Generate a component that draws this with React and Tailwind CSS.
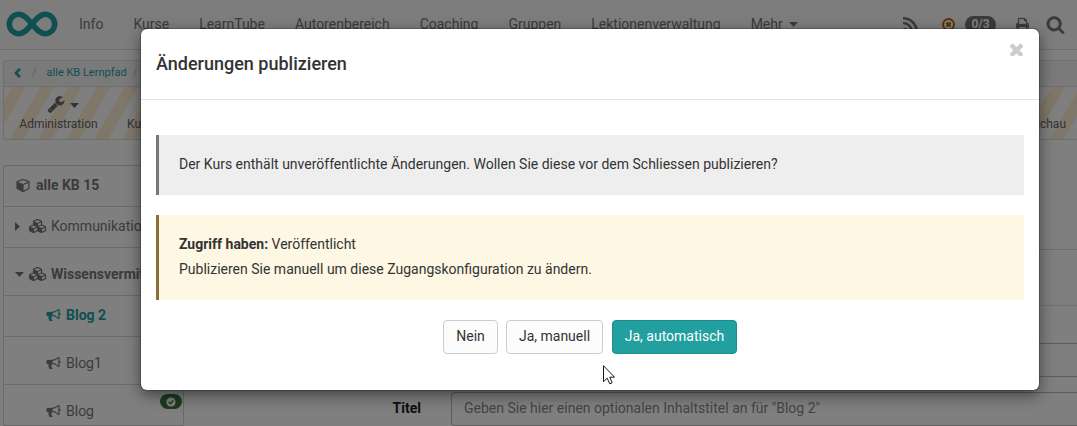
import React from "react";

const ICONS = {
  bullhorn: ["0 0 1792 1792", "M1664 640q53 0 90.5 37.5t37.5 90.5-37.5 90.5-90.5 37.5v384q0 52-38 90t-90 38q-417-347-812-380-58 19-91 66t-31 100.5 40 92.5q-20 33-23 65.5t6 58 33.5 55 48 50 61.5 50.5q-29 58-111.5 83t-168.5 11.5-132-55.5q-7-23-29.5-87.5t-32-94.5-23-89-15-101 3.5-98.5 22-110.5h-122q-66 0-113-47t-47-113v-192q0-66 47-113t113-47h480q435 0 896-384 52 0 90 38t38 90v384zm-128 604v-954q-394 302-768 343v270q377 42 768 341z"],
  wrench: ["0 0 1792 1792", "M448 1472q0-26-19-45t-45-19-45 19-19 45 19 45 45 19 45-19 19-45zm644-420l-682 682q-37 37-90 37-52 0-91-37l-106-108q-38-36-38-90 0-53 38-91l681-681q39 98 114.5 173.5t173.5 114.5zm634-435q0 39-23 106-47 134-164.5 217.5t-258.5 83.5q-185 0-316.5-131.5t-131.5-316.5 131.5-316.5 316.5-131.5q58 0 121.5 16.5t107.5 46.5q16 11 16 28t-16 28l-293 169v224l193 107q5-3 79-48.5t135.5-81 70.5-35.5q15 0 23.5 10t8.500 25z"],
  search: ["0 0 1792 1792", "M1216 832q0-185-131.5-316.5t-316.5-131.5-316.5 131.5-131.5 316.5 131.5 316.5 316.5 131.5 316.5-131.5 131.5-316.5zm512 832q0 52-38 90t-90 38q-54 0-90-38l-343-342q-179 124-399 124-143 0-273.5-55.5t-225-150-150-225-55.5-273.5 55.5-273.5 150-225 225-150 273.5-55.5 273.5 55.5 225 150 150 225 55.5 273.5q0 220-124 399l343 343q37 37 37 90z"],
  times: ["302 302 1188 1188", "M1490 1322q0 40-28 68l-136 136q-28 28-68 28t-68-28l-294-294-294 294q-28 28-68 28t-68-28l-136-136q-28-28-28-68t28-68l294-294-294-294q-28-28-28-68t28-68l136-136q28-28 68-28t68 28l294 294 294-294q28-28 68-28t68 28l136 136q28 28 28 68t-28 68l-294 294 294 294q28 28 28 68z"],
  cube: ["0 0 1664 1792", "M896 1629l640-349v-636l-640 233v752zm-64-865l698-254-698-254-698 254zm832-252v768q0 35-18 65t-49 47l-704 384q-28 16-61 16t-61-16l-704-384q-31-17-49-47t-18-65v-768q0-40 23-73t61-47l704-256q22-8 44-8t44 8l704 256q38 14 61 47t23 73z"],
  cubes: ["0 0 2304 1792", "M640 1632l384-192v-314l-384 164v342zm-64-454l404-173-404-173-404 173zm1088 454l384-192v-314l-384 164v342zm-64-454l404-173-404-173-404 173zm-448-293l384-165v-266l-384 164v267zm-64-379l441-189-441-189-441 189zm1088 518v416q0 36-19 67t-52 47l-448 224q-25 14-57 14t-57-14l-448-224q-4-2-7-4-2 2-7 4l-448 224q-25 14-57 14t-57-14l-448-224q-33-16-52-47t-19-67v-416q0-38 21.5-70t56.5-48l434-186v-400q0-38 21.5-70t56.5-48l448-192q23-10 50-10t50 10l448 192q35 16 56.5 48t21.5 70v400l434 186q36 16 57 48t21 70z"],
  print: ["0 0 1664 1792", "M384 1536h896v-256h-896v256zm0-640h896v-384h-160q-40 0-68-28t-28-68v-160h-640v640zm1152 64q0-26-19-45t-45-19-45 19-19 45 19 45 45 19 45-19 19-45zm128 0v416q0 13-9.5 22.5t-22.5 9.5h-224v160q0 40-28 68t-68 28h-960q-40 0-68-28t-28-68v-160h-224q-13 0-22.5-9.5t-9.5-22.5v-416q0-79 56.5-135.5t135.5-56.5h64v-544q0-40 28-68t68-28h672q40 0 88 20t76 48l152 152q28 28 48 76t20 88v256h64q79 0 135.5 56.5t56.5 135.5z"],
};

function Icon({ name, className }) {
  const [viewBox, d] = ICONS[name];
  return (
    <svg viewBox={viewBox} className={`shrink-0 ${className}`} fill="currentColor" stroke="currentColor" strokeWidth="24">
      <path d={d} />
    </svg>
  );
}

function Caret({ right = false }) {
  return right ? (
    <svg viewBox="0 0 5 9" className="h-[9px] w-[5px] shrink-0" fill="currentColor"><path d="M0 0 5 4.500 0 9z" /></svg>
  ) : (
    <svg viewBox="0 0 9 5" className="h-[5px] w-[9px] shrink-0" fill="currentColor"><path d="M0 0h9L4.500 5z" /></svg>
  );
}

function NavBar() {
  const links = ["Info", "Kurse", "LearnTube", "Autorenbereich", "Coaching", "Gruppen", "Lektionenverwaltung"];
  return (
    <nav className="flex h-[50px] shrink-0 items-center border-b border-[#dcdcdc] bg-[#fafafa] pb-px text-[#777]">
      <svg viewBox="0 0 52 26" className="ml-1.5 h-[26px] w-[52px] shrink-0" fill="none" stroke="#22a0a0" strokeWidth="5.6">
        <path d="M26 13C21 7.500 18 3.300 13 3.300a9.700 9.700 0 0 0 0 19.400C18 22.700 21 18.500 26 13S34 3.300 39 3.300a9.700 9.700 0 0 1 0 19.400C34 22.700 31 18.500 26 13z" />
      </svg>
      <div className="ml-[21px] flex gap-[30px]">
        {links.map((label) => <a key={label}>{label}</a>)}
        <a className="flex items-center gap-1.5">Mehr <Caret /></a>
      </div>
      <div className="ml-auto flex items-center pr-3">
        <svg viewBox="0 0 15 15" className="h-[15px] w-[15px]" fill="none" stroke="currentColor" strokeWidth="2.500">
          <circle cx="2.200" cy="12.800" r="2.100" fill="currentColor" stroke="none" />
          <path d="M0 6a9 9 0 0 1 9 9M0 1.200A13.800 13.800 0 0 1 13.800 15" />
        </svg>
        <svg viewBox="0 0 13 13" className="ml-6 h-[13px] w-[13px]" fill="none" stroke="#b5640f">
          <circle cx="6.500" cy="6.500" r="5.500" strokeWidth="1.900" />
          <path d="M4.500 4.500l4 4m0-4l-4 4" strokeWidth="2.400" />
        </svg>
        <span className="ml-2.5 flex h-[17px] w-[31px] items-center justify-center rounded-full bg-[#777] text-[12px] font-bold text-white">0/3</span>
        <Icon name="print" className="ml-5 h-3.5 w-[13px]" />
        <Icon name="search" className="ml-[17px] h-[19px] w-[19px]" />
      </div>
    </nav>
  );
}

function Toolbar() {
  return (
    <section className="ml-[3px] mt-2.5 h-20 shrink-0 overflow-hidden rounded-l border border-r-0 border-[#dcdcdc]">
      <div className="flex h-[26px] items-center border-b border-[#dcdcdc] bg-[#f5f5f5] pb-0.5 text-[11px] text-[#22a0a0]">
        <svg viewBox="0 0 7 10" className="ml-2.5 h-2.5 w-[7px]" fill="none" stroke="currentColor" strokeWidth="2.600"><path d="M6 .9 1.900 5 6 9.100" /></svg>
        <span className="ml-[11px] text-[#bbb]">/</span>
        <a className="ml-2.5">alle KB Lernpfad</a>
        <span className="ml-1.5 text-[#bbb]">/</span>
      </div>
      <div className="flex h-[52px] justify-between bg-[repeating-linear-gradient(120deg,#fff_0_7px,#fff0d5_7px_19px,#fff_19px_24.330px)] text-[12px] text-[#666]">
        <div className="flex">
          <div className="ml-[15px] flex w-[79px] flex-col items-center pt-2">
            <span className="ml-[9px] flex h-[18px] items-center gap-[5px]"><Icon name="wrench" className="h-[18px] w-[18px]" /><span className="pt-0.5"><Caret /></span></span>
            <span className="mt-[3px] leading-[17px]">Administration</span>
          </div>
          <span className="ml-[29px] mt-[29px] leading-[17px]">Kurs</span>
        </div>
        <span className="mr-[11px] mt-[29px] leading-[17px]">Vorschau</span>
      </div>
    </section>
  );
}

function Sidebar() {
  return (
    <aside className="flex h-[261px] w-[181px] shrink-0 flex-col overflow-hidden whitespace-nowrap rounded-tl border border-b-0 border-[#d4d4d4] text-[#777]">
      <div className="flex h-[41px] items-center border-b border-[#d4d4d4] pb-0.5 pl-3 font-bold"><Icon name="cube" className="mr-1.5 h-[14px] w-[14px]" />alle KB 15</div>
      <div className="flex h-[41px] items-center border-b border-[#d4d4d4] pb-0.5 pl-[11px]"><Caret right /><Icon name="cubes" className="ml-[9px] mr-1 h-[14px] w-[18px]" />Kommunikation</div>
      <div className="flex h-12 items-center border-b border-[#d4d4d4] pl-[11px] pt-[5px] font-bold"><Caret /><Icon name="cubes" className="ml-[5px] mr-1 h-[14px] w-[18px]" />Wissensvermittlung</div>
      <div className="flex h-[41px] items-center border-b border-[#d4d4d4] pb-0.5 pl-[42px] font-bold text-[#22a0a0]"><Icon name="bullhorn" className="mr-[5px] h-3.5 w-[15px]" />Blog 2</div>
      <div className="flex h-12 items-center border-b border-[#d4d4d4] pl-[42px] pt-[5px]"><Icon name="bullhorn" className="mr-[5px] h-3.5 w-[15px]" />Blog1</div>
      <div className="flex h-[41px] items-center border-b border-[#d4d4d4] pl-[42px] pt-[12px]">
        <Icon name="bullhorn" className="mr-[5px] h-3.5 w-[15px]" />Blog
        <span className="mb-[19px] ml-auto mr-px flex h-[15px] w-[22px] items-center justify-center rounded-full bg-[#3c763d]">
          <svg viewBox="0 0 10 10" className="h-2.5 w-2.5" fill="none"><circle cx="5" cy="5" r="4.600" fill="#fff" /><path d="M2.700 5l1.700 1.700 3-3.200" stroke="#3c763d" strokeWidth="1.500" /></svg>
        </span>
      </div>
    </aside>
  );
}

function Editor() {
  return (
    <main className="flex min-w-0 flex-1 flex-col">
      <div className="h-[85px] border-b border-[#d8d8d8]" />
      <div className="h-14 border-b border-[#e2e2e2]" />
      <div className="ml-[267px] mt-[37px] h-[34px] shrink-0 rounded-l border border-r-0 border-[#bbb]" />
      <div className="mt-[15px] flex h-[34px] shrink-0 items-center">
        <b className="w-[237px] pb-0.5 text-right text-[#222]">Titel</b>
        <div className="ml-[30px] flex h-[34px] flex-1 items-center rounded-l border border-r-0 border-[#bbb] pb-0.5 pl-3 text-[#888]">Geben Sie hier einen optionalen Inhaltstitel an für "Blog 2"</div>
      </div>
    </main>
  );
}

function Dialog() {
  return (
    <div role="dialog" className="flex h-[361px] w-[898px] flex-col rounded-md bg-white text-[#333] shadow-[0_5px_15px_rgba(0,0,0,0.5),0_0_0_1px_rgba(0,0,0,0.2)]">
      <header className="flex h-[71px] shrink-0 justify-between border-b border-[#e5e5e5] px-[15px]">
        <h4 className="pt-[22px] text-[18px] font-medium leading-[25px]">Änderungen publizieren</h4>
        <Icon name="times" className="mr-px mt-3.5 h-[13px] w-[13px] text-[#ccc]" />
      </header>
      <div className="px-[15px] pt-[35px] leading-[25px]">
        <p className="h-[60px] border-l-[3px] border-[#777] bg-[#eee] pl-5 pt-[17px]">Der Kurs enthält unveröffentlichte Änderungen. Wollen Sie diese vor dem Schliessen publizieren?</p>
        <p className="mt-5 h-[85px] border-l-[3px] border-[#8a6d3b] bg-[#fdf7e3] pl-5 pt-[17px]"><b>Zugriff haben:</b> Veröffentlicht<br />Publizieren Sie manuell um diese Zugangskonfiguration zu ändern.</p>
        <div className="mt-5 flex justify-center">
          <button className="h-[34px] w-[55px] rounded border border-[#ccc] bg-[#fcfcfc] pb-0.5">Nein</button>
          <button className="ml-2 h-[34px] w-[97px] rounded border border-[#ccc] bg-[#fcfcfc] pb-0.5">Ja, manuell</button>
          <button className="ml-[9px] h-[34px] w-[125px] rounded border border-[#1e8c8c] bg-[#22a0a0] pb-0.5 text-white">Ja, automatisch</button>
        </div>
      </div>
    </div>
  );
}

export default function App() {
  return (
    <div className="relative flex h-[426px] w-[1077px] flex-col overflow-hidden bg-white font-['Roboto',sans-serif] text-[14px] leading-5">
      <NavBar />
      <Toolbar />
      <div className="ml-[3px] mt-[25px] flex">
        <Sidebar />
        <Editor />
      </div>
      <div className="absolute inset-0 flex bg-black/50 pl-[141px] pt-[29px]">
        <Dialog />
      </div>
      <svg viewBox="0 0 12 20" className="absolute left-[603px] top-[365px] h-5 w-3">
        <path d="M.5.7v16l3.700-3.500 2.500 5.600 2.500-1.100-2.500-5.500h4.800z" fill="#fff" stroke="#15151f" />
      </svg>
    </div>
  );
}
